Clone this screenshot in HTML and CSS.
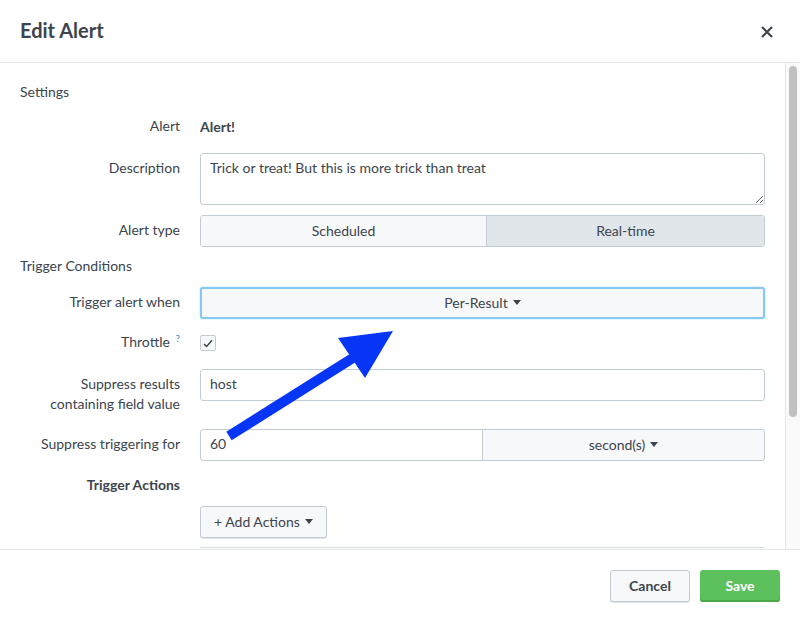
FILE: index.html
```html
<!DOCTYPE html>
<html>
<head>
<meta charset="utf-8">
<link rel="stylesheet" href="styles.css">
</head>
<body>
<div class="modal">
  <header class="modal-header">
    <h1 class="title">Edit Alert</h1>
    <button class="close" aria-label="Close">
      <svg width="12" height="12" viewBox="0 0 12 12"><path d="M1 1L11 11M11 1L1 11" stroke="#3c444d" stroke-width="2.2" stroke-linecap="butt"/></svg>
    </button>
  </header>
  <div class="modal-body">
    <div class="content">
      <div class="section">Settings</div>
      <div class="row">
        <div class="label">Alert</div>
        <div class="control static">Alert!</div>
      </div>
      <div class="row">
        <div class="label">Description</div>
        <div class="control"><textarea class="textarea">Trick or treat! But this is more trick than treat</textarea></div>
      </div>
      <div class="row row-tight">
        <div class="label">Alert type</div>
        <div class="control toggle">
          <div class="seg first">Scheduled</div>
          <div class="seg active">Real-time</div>
        </div>
      </div>
      <div class="section sec2">Trigger Conditions</div>
      <div class="row row-mb8">
        <div class="label">Trigger alert when</div>
        <div class="control"><div class="dropdown focus">Per-Result <span class="caret"></span></div></div>
      </div>
      <div class="row">
        <div class="label">Throttle <sup class="help">?</sup></div>
        <div class="control check-wrap">
          <span class="checkbox"><svg width="10" height="9" viewBox="0 0 10 9"><path d="M1 5L3.6 7.5L9 1.2" fill="none" stroke="#3c444d" stroke-width="1.4"/></svg></span>
        </div>
      </div>
      <div class="row">
        <div class="label">Suppress results<br>containing field value</div>
        <div class="control"><div class="input">host</div></div>
      </div>
      <div class="row row-mb9">
        <div class="label">Suppress triggering for</div>
        <div class="control split">
          <div class="input left">60</div>
          <div class="dropdown right">second(s) <span class="caret"></span></div>
        </div>
      </div>
      <div class="row row-mb6">
        <div class="label bold">Trigger Actions</div>
        <div class="control"></div>
      </div>
      <div class="row row-mb9">
        <div class="label"></div>
        <div class="control"><button class="btn add">+ Add Actions <span class="caret"></span></button></div>
      </div>
      <div class="row">
        <div class="label"></div>
        <div class="control"><div class="table-top"></div></div>
      </div>
    </div>
    <div class="scrollbar"><div class="thumb"></div></div>
  </div>
  <footer class="modal-footer">
    <button class="btn cancel">Cancel</button>
    <button class="btn save">Save</button>
  </footer>
  <svg class="arrow" width="800" height="622" viewBox="0 0 800 622">
    <line x1="229" y1="436" x2="356" y2="356" stroke="#0735f5" stroke-width="10"/>
    <polygon points="338,338 393,331 365,378" fill="#0735f5"/>
  </svg>
</div>
</body>
</html>
```

FILE: styles.css
```css
* { box-sizing: border-box; }
html, body { margin: 0; padding: 0; }
body {
  font-family: Lato, "Open Sans", sans-serif;
  font-size: 14px;
  color: #3c444d;
  background: #fff;
}
.modal {
  position: relative;
  width: 800px;
  height: 622px;
  overflow: hidden;
  display: flex;
  flex-direction: column;
}
.modal-header {
  height: 63px;
  border-bottom: 1px solid #e1e6eb;
  display: flex;
  align-items: center;
  justify-content: space-between;
  padding: 0 26px 0 20px;
  flex: none;
}
.title {
  margin: 0;
  font-size: 20px;
  font-weight: 700;
  color: #3c444d;
  padding-bottom: 2px;
}
.close {
  border: 0;
  background: none;
  padding: 0;
  width: 14px;
  height: 14px;
  display: flex;
  align-items: center;
  justify-content: center;
  margin-top: 2px;
}
.modal-body {
  height: 486px;
  display: flex;
  flex: none;
}
.content {
  flex: 1;
  overflow: hidden;
  padding: 19px 20px 0 20px;
}
.scrollbar {
  width: 15px;
  border-left: 1px solid #e8e8e8;
  background: #fafafa;
  padding: 3px 3px 0 3px;
}
.thumb {
  width: 8px;
  height: 351px;
  border-radius: 4px;
  background: #c1c1c1;
}
.section {
  line-height: 20px;
  margin-bottom: 9px;
}
.sec2 { margin-bottom: 11px; }
.row {
  display: flex;
  align-items: flex-start;
  margin-bottom: 10px;
}
.row-tight { margin-bottom: 9px; }
.row-mb8 { margin-bottom: 8px; }
.row-mb9 { margin-bottom: 9px; }
.row-mb6 { margin-bottom: 6px; }
.label {
  width: 160px;
  flex: none;
  text-align: right;
  line-height: 20px;
  padding: 5px 0;
  margin-right: 20px;
}
.label.bold { font-weight: 700; }
.help {
  color: #1e93c6;
  font-size: 10px;
  vertical-align: top;
  position: relative;
  top: -4px;
  margin-left: 2px;
}
.control {
  flex: 1;
  min-width: 0;
}
.control.static {
  font-weight: 700;
  line-height: 20px;
  padding: 6px 0;
}
.textarea {
  display: block;
  width: 100%;
  height: 52px;
  border: 1px solid #c3cbd4;
  border-radius: 3px;
  padding: 4px 9px;
  font-family: inherit;
  font-size: 14px;
  line-height: 20px;
  color: #3c444d;
  resize: vertical;
  margin: 0;
}
.toggle {
  display: flex;
  height: 32px;
  border: 1px solid #c3cbd4;
  border-radius: 3px;
  overflow: hidden;
}
.seg {
  flex: 1;
  display: flex;
  align-items: center;
  justify-content: center;
  background: #f7f8fa;
  padding-bottom: 2px;
}
.seg.first {
  flex: none;
  width: 285px;
}
.seg.active {
  background: #e1e6eb;
  border-left: 1px solid #c3cbd4;
}
.dropdown {
  height: 32px;
  border: 1px solid #c3cbd4;
  border-radius: 3px;
  background: #f7f8fa;
  display: flex;
  align-items: center;
  justify-content: center;
  gap: 5px;
  padding-bottom: 2px;
}
.dropdown.focus {
  border: 2px solid #86c8f4;
  box-shadow: 0 0 2px #a8d8f8;
}
.caret {
  display: inline-block;
  width: 0;
  height: 0;
  border-left: 4px solid transparent;
  border-right: 4px solid transparent;
  border-top: 5px solid #3c444d;
  margin-top: 1px;
}
.check-wrap {
  padding: 8px 0;
  height: 32px;
}
.checkbox {
  width: 16px;
  height: 16px;
  border: 1px solid #c3cbd4;
  border-radius: 2px;
  background: #f7f8fa;
  display: flex;
  align-items: center;
  justify-content: center;
}
.input {
  height: 32px;
  border: 1px solid #c3cbd4;
  border-radius: 3px;
  background: #fff;
  padding: 0 9px;
  line-height: 28px;
}
.split {
  display: flex;
}
.split .input.left {
  width: 283px;
  flex: none;
  border-radius: 3px 0 0 3px;
}
.split .right {
  flex: 1;
  border-radius: 0 3px 3px 0;
  margin-left: -1px;
}
.btn {
  font-family: inherit;
  font-size: 14px;
  color: #3c444d;
  border: 1px solid #c3cbd4;
  border-radius: 3px;
  background: #f7f8fa;
  height: 32px;
  padding: 0 13px 2px;
  display: inline-flex;
  align-items: center;
  gap: 5px;
  box-shadow: 0 1px 0 #dde2e7;
}
.table-top {
  height: 20px;
  border-top: 1px solid #d4dae0;
  background: #fff;
}
.modal-footer {
  flex: 1;
  border-top: 1px solid #e1e6eb;
  display: flex;
  justify-content: flex-end;
  align-items: flex-start;
  gap: 10px;
  padding: 20px 20px 0 0;
}
.cancel {
  width: 80px;
  justify-content: center;
  font-weight: 700;
}
.save {
  width: 80px;
  justify-content: center;
  font-weight: 700;
  background: #5cc05c;
  border: 0;
  color: #fff;
  box-shadow: 0 -2px 0 #4aa84a inset;
}
.arrow {
  position: absolute;
  left: 0;
  top: 0;
  pointer-events: none;
}
```
